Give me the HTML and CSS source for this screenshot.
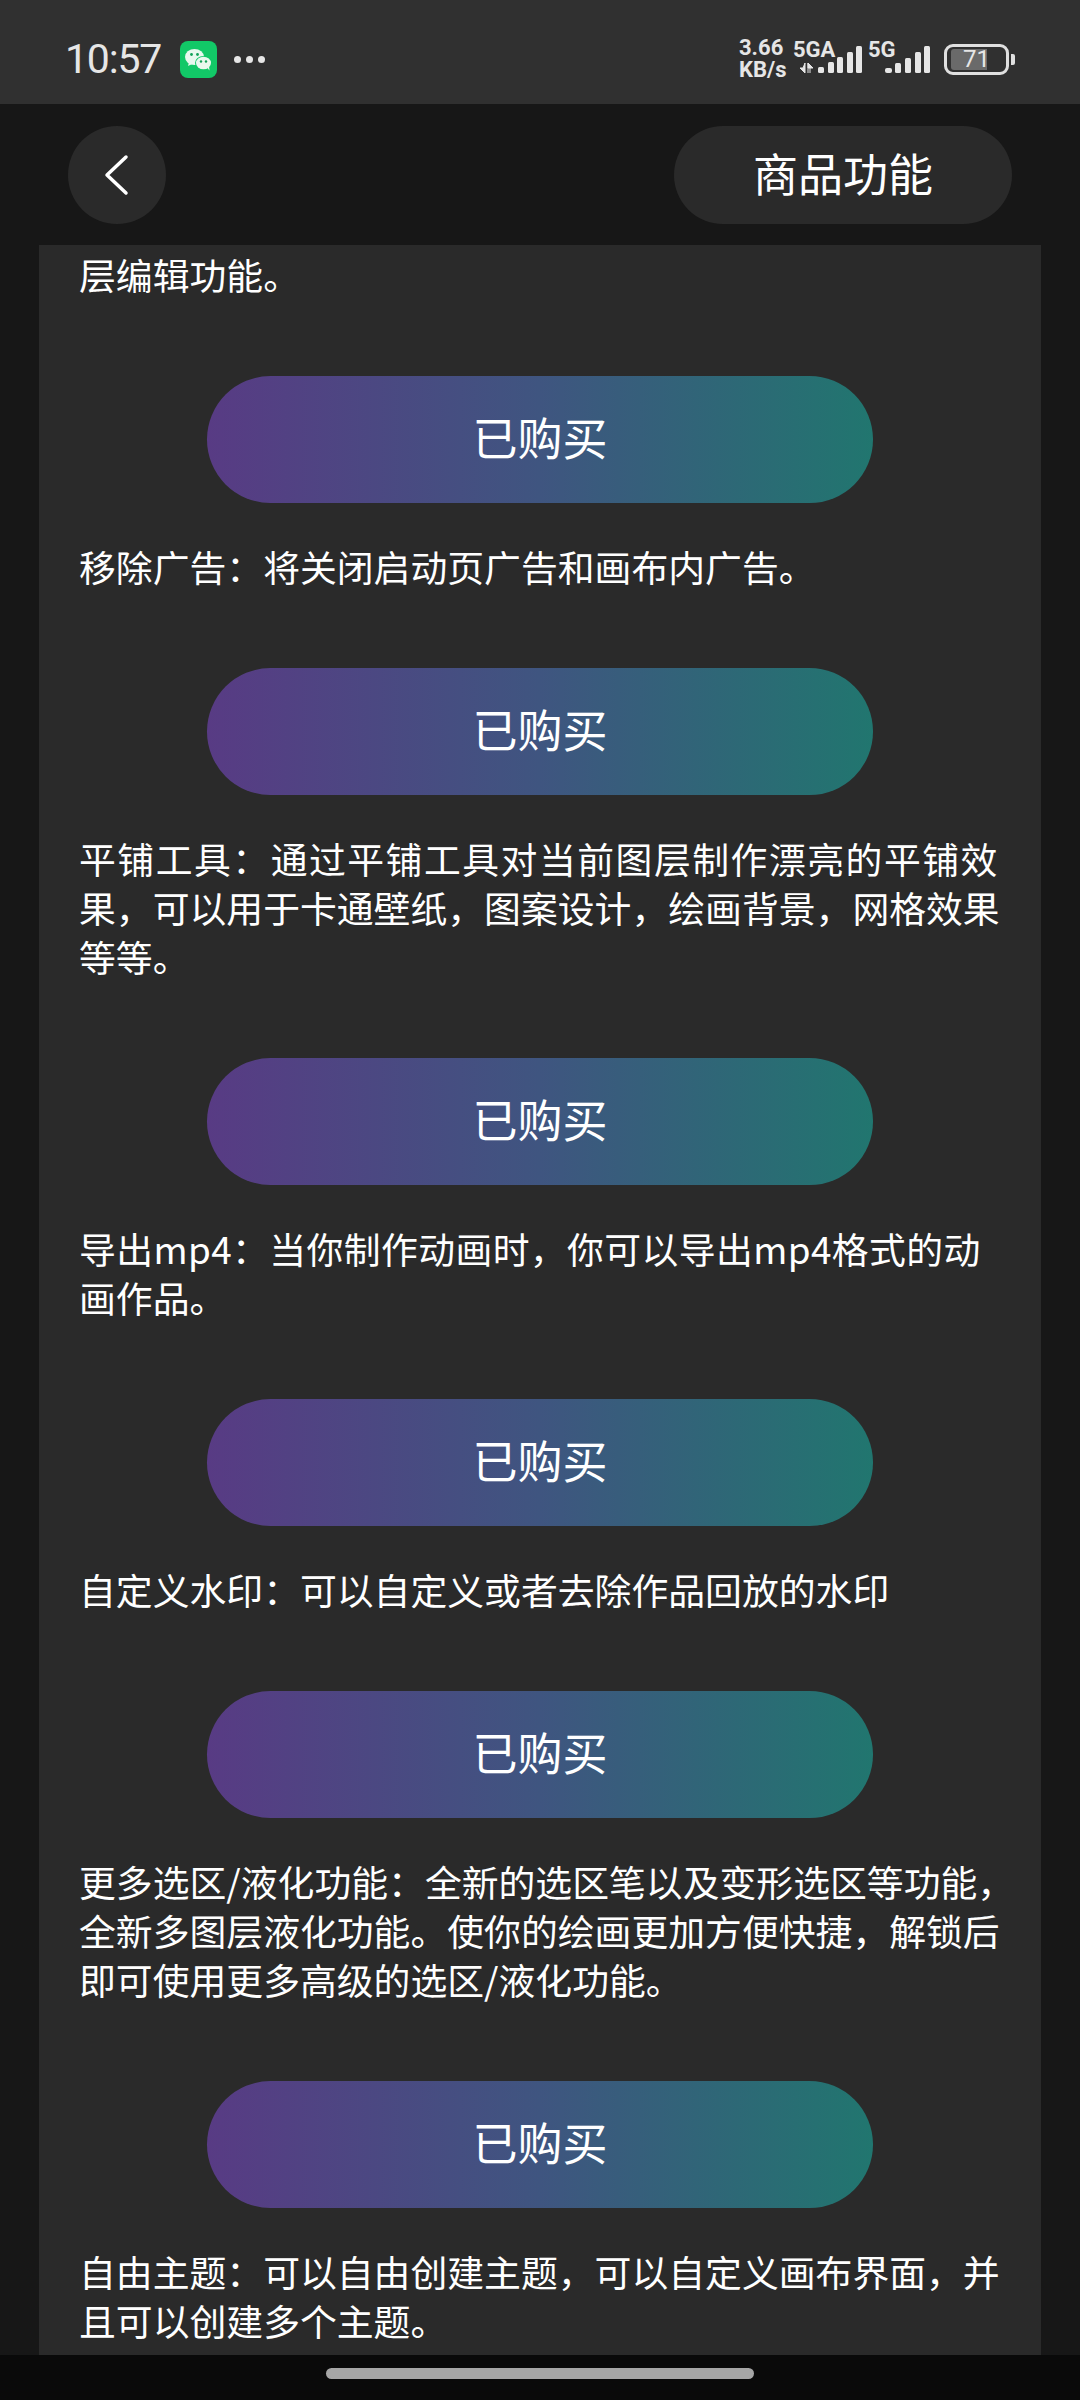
FILE: index.html
```html
<!DOCTYPE html>
<html lang="zh-CN">
<head>
  <meta charset="UTF-8" />
  <meta name="viewport" content="width=device-width, initial-scale=1.0"/>
  <title>商品功能</title>
  <link rel="stylesheet" href="styles.css">
</head>
<body>
  <div class="status-bar">
    <div class="status-left">
      <span class="time">10:57</span>
      <svg class="wechat" width="37" height="37" viewBox="0 0 37 37">
        <rect width="37" height="37" rx="8" fill="#12c867"/>
        <ellipse cx="14.5" cy="16" rx="9.5" ry="8" fill="#e9f8ee"/>
        <path d="M9 21l-1 4 5-2.500z" fill="#e9f8ee"/>
        <ellipse cx="23.500" cy="22" rx="8.500" ry="7" fill="#12c867"/>
        <ellipse cx="23.500" cy="22" rx="7.500" ry="6.300" fill="#e9f8ee"/>
        <path d="M27 26.500l2.500 3-.5-4.500z" fill="#e9f8ee"/>
        <circle cx="11.500" cy="13.500" r="1.400" fill="#12a158"/>
        <circle cx="17.500" cy="13.500" r="1.400" fill="#12a158"/>
        <circle cx="21" cy="20.500" r="1.200" fill="#12a158"/>
        <circle cx="26" cy="20.500" r="1.200" fill="#12a158"/>
      </svg>
      <span class="dots"><i></i><i></i><i></i></span>
    </div>
    <div class="status-right">
      <div class="speed">3.66<br>KB/s</div>
      <svg class="signal-a" width="70" height="44" viewBox="0 0 70 44">
        <text x="0" y="20" class="net">5GA</text>
        <path d="M12 26v10l-5-5h3zM15 26v10M15 26l5 5h-5zM17 31v5" fill="#e6e6e6" stroke="#e6e6e6" stroke-width="1"/>
        <rect x="25" y="30" width="6" height="6" rx="1.500"/>
        <rect x="35" y="25" width="6" height="11" rx="1.500"/>
        <rect x="44" y="20" width="6" height="16" rx="1.500"/>
        <rect x="54" y="15" width="6" height="21" rx="1.500"/>
        <rect x="63" y="9" width="6" height="27" rx="1.500"/>
      </svg>
      <svg class="signal-b" width="63" height="44" viewBox="0 0 63 44">
        <text x="0" y="20" class="net">5G</text>
        <rect x="17" y="31" width="7" height="5" rx="2"/>
        <rect x="27" y="26" width="6" height="10" rx="1.500"/>
        <rect x="37" y="21" width="6" height="15" rx="1.500"/>
        <rect x="47" y="15" width="6" height="21" rx="1.500"/>
        <rect x="56" y="9" width="6" height="27" rx="1.500"/>
      </svg>
      <div class="battery">
        <div class="battery-body">
          <div class="battery-level"></div>
          <span class="battery-num">71</span>
        </div>
        <div class="battery-nib"></div>
      </div>
    </div>
  </div>

  <div class="top-bar">
    <div class="back-btn">
      <svg width="26" height="42" viewBox="0 0 26 42" fill="none">
        <path d="M23 3L4 21l19 18" stroke="#fff" stroke-width="3.500" stroke-linecap="round" stroke-linejoin="round"/>
      </svg>
    </div>
    <div class="title-pill">商品功能</div>
  </div>

  <div class="panel">
    <p class="desc">层编辑功能。</p>
    <div class="buy-btn">已购买</div>
    <p class="desc">移除广告&#xFF1A;将关闭启动页广告和画布内广告。</p>
    <div class="buy-btn">已购买</div>
    <p class="desc"><span class="spread">平铺工具&#xFF1A;通过平铺工具对当前图层制作漂亮的平铺效</span><br>果&#xFF0C;可以用于卡通壁纸&#xFF0C;图案设计&#xFF0C;绘画背景&#xFF0C;网格效果<br>等等。</p>
    <div class="buy-btn">已购买</div>
    <p class="desc"><span class="spread-small">导出mp4&#xFF1A;当你制作动画时&#xFF0C;你可以导出mp4格式的动</span><br>画作品。</p>
    <div class="buy-btn">已购买</div>
    <p class="desc">自定义水印&#xFF1A;可以自定义或者去除作品回放的水印</p>
    <div class="buy-btn">已购买</div>
    <p class="desc">更多选区/液化功能&#xFF1A;全新的选区笔以及变形选区等功能&#xFF0C;<br>全新多图层液化功能。使你的绘画更加方便快捷&#xFF0C;解锁后<br>即可使用更多高级的选区/液化功能。</p>
    <div class="buy-btn">已购买</div>
    <p class="desc">自由主题&#xFF1A;可以自由创建主题&#xFF0C;可以自定义画布界面&#xFF0C;并<br>且可以创建多个主题。</p>
  </div>

  <div class="nav-bar">
    <div class="home-bar"></div>
  </div>
</body>
</html>
```

FILE: styles.css
```css
* {
  margin: 0;
  padding: 0;
  box-sizing: border-box;
}

body {
  height: 2400px;
  display: flex;
  flex-direction: column;
  overflow: hidden;
  background: #171717;
  color: #fff;
  font-family: "Noto Sans CJK SC", "Noto Sans", sans-serif;
}

.status-bar {
  height: 104px;
  flex-shrink: 0;
  display: flex;
  justify-content: space-between;
  align-items: center;
  padding: 14px 65px 0;
  background: #303030;
  color: #e6e6e6;
}

.status-left {
  display: flex;
  align-items: center;
}

.time {
  width: 115px;
  font-family: Roboto, sans-serif;
  font-size: 41px;
  letter-spacing: -1.2px;
}

.dots {
  display: flex;
  gap: 5px;
  margin-left: 17px;
}

.dots i {
  width: 7px;
  height: 7px;
  border-radius: 50%;
  background: #e6e6e6;
}

.status-right {
  display: flex;
  align-items: center;
}

.speed {
  width: 54px;
  font-family: Roboto, sans-serif;
  font-size: 22px;
  font-weight: 700;
  line-height: 22px;
  margin: -1px 0;
}

.signal-b {
  margin-left: 5px;
}

.signal-a rect,
.signal-b rect {
  fill: #e6e6e6;
}

.net {
  font-family: Roboto, sans-serif;
  font-size: 22px;
  font-weight: 700;
  fill: #e6e6e6;
}

.battery {
  display: flex;
  align-items: center;
  margin-left: 13px;
}

.battery-body {
  position: relative;
  width: 65px;
  height: 31px;
  border: 3px solid #e0e0e0;
  border-radius: 9px;
}

.battery-level {
  position: absolute;
  left: 4px;
  top: 2px;
  bottom: 2px;
  width: 36px;
  background: #6a6a6a;
  border-radius: 3px 0 0 3px;
}

.battery-num {
  position: absolute;
  left: 0;
  right: 0;
  top: -3px;
  text-align: center;
  font-family: Roboto, sans-serif;
  font-size: 24px;
  line-height: 31px;
  color: #e6e6e6;
}

.battery-nib {
  width: 4px;
  height: 11px;
  margin-left: 2px;
  background: #e0e0e0;
  border-radius: 0 2px 2px 0;
}

.top-bar {
  height: 141px;
  flex-shrink: 0;
  display: flex;
  justify-content: space-between;
  padding: 22px 68px 0;
}

.back-btn {
  width: 98px;
  height: 98px;
  display: flex;
  align-items: center;
  justify-content: center;
  padding-right: 2px;
  background: #2a2a2a;
  border-radius: 50%;
}

.title-pill {
  width: 338px;
  height: 98px;
  display: flex;
  align-items: center;
  justify-content: center;
  padding-bottom: 6px;
  background: #2a2a2a;
  border-radius: 49px;
  font-size: 45px;
}

.panel {
  flex: 1;
  min-height: 0;
  overflow: hidden;
  margin: 0 39px;
  padding-top: 5px;
  background: #2a2a2a;
}

.desc {
  margin-left: 40px;
  font-size: 36.85px;
  line-height: 49px;
  white-space: nowrap;
}

/* these two lines run wider in the original */
.spread {
  letter-spacing: 1.5px;
}

.spread-small {
  letter-spacing: 0.4px;
}

.buy-btn {
  width: 666px;
  height: 127px;
  margin: 77px auto 39px;
  display: flex;
  align-items: center;
  justify-content: center;
  padding-bottom: 6px;
  border-radius: 64px;
  background: linear-gradient(90deg, #583b84, #3f5580 50%, #21766f);
  font-size: 45px;
}

.nav-bar {
  height: 45px;
  flex-shrink: 0;
  display: flex;
  justify-content: center;
  padding-top: 13px;
  background: #0a0a0a;
}

.home-bar {
  width: 428px;
  height: 11px;
  background: #a6a6a6;
  border-radius: 6px;
}
```
